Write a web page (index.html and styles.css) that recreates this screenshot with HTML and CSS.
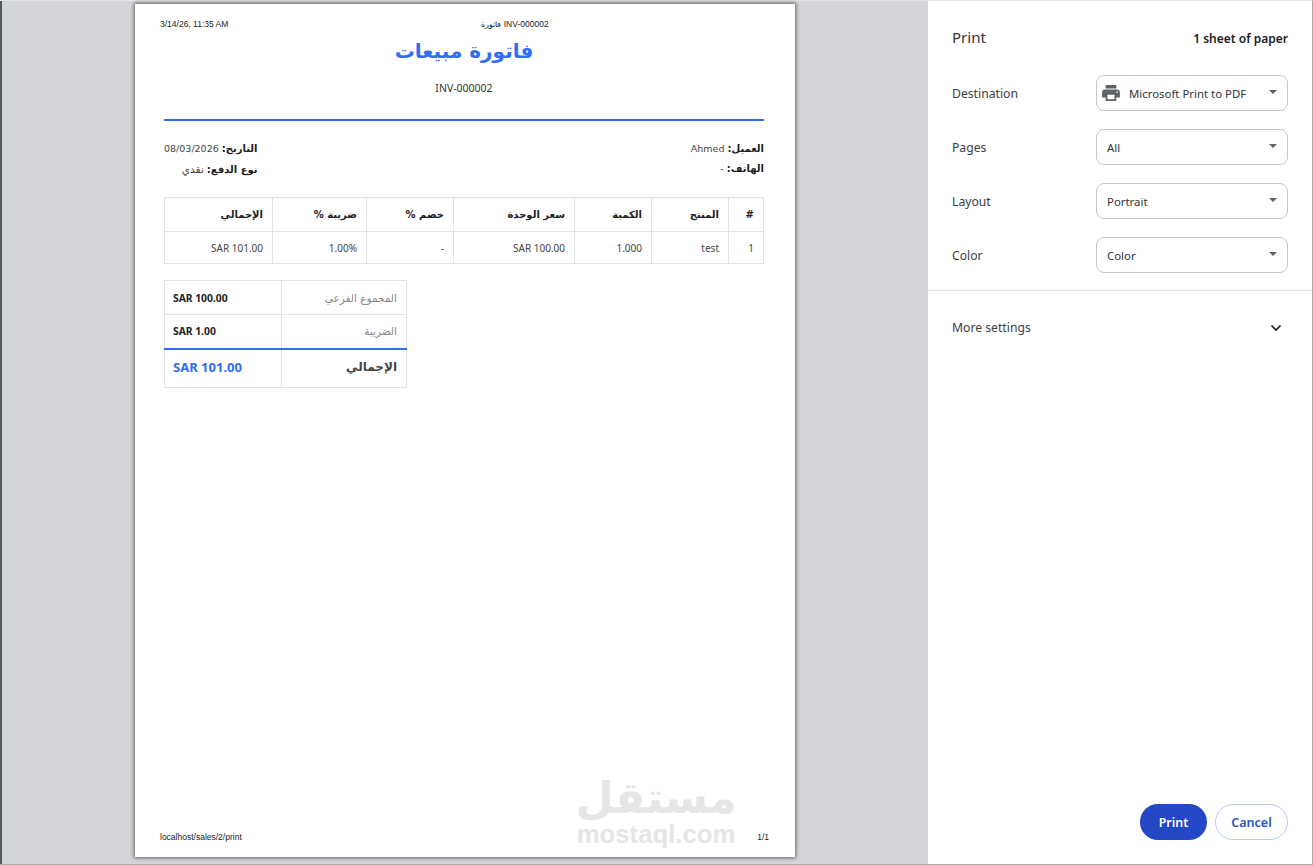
FILE: index.html
```html
<!DOCTYPE html>
<html lang="en">
<head>
<meta charset="utf-8">
<title>Print</title>
<link rel="stylesheet" href="styles.css">
</head>
<body>
<div class="app">
  <main class="preview">
    <section class="paper">
      <header class="print-head">
        <span class="stamp">3/14/26, 11:35 AM</span>
        <span class="doc-name"><span class="doc-ar">فاتورة</span> INV-000002</span>
        <span class="stamp-spacer"></span>
      </header>
      <div class="sheet">
        <h1 class="title">فاتورة مبيعات</h1>
        <p class="number">INV-000002</p>
        <hr class="rule">
        <div class="info" dir="rtl">
          <div class="info-col">
            <p class="info-line"><b>العميل:</b> Ahmed</p>
            <p class="info-line"><b>الهاتف:</b> -</p>
          </div>
          <div class="info-col">
            <p class="info-line"><b>التاريخ:</b> 08/03/2026</p>
            <p class="info-line"><b>نوع الدفع:</b> <span class="pay">نقدي</span></p>
          </div>
        </div>
        <table class="items" dir="rtl">
          <colgroup>
            <col class="c-num"><col class="c-prod"><col class="c-qty"><col class="c-price"><col class="c-disc"><col class="c-tax"><col class="c-total">
          </colgroup>
          <thead>
            <tr><th>#</th><th>المنتج</th><th>الكمية</th><th>سعر الوحدة</th><th>خصم %</th><th>ضريبة %</th><th>الإجمالي</th></tr>
          </thead>
          <tbody>
            <tr><td>1</td><td>test</td><td>1.000</td><td>SAR 100.00</td><td>-</td><td>1.00%</td><td>SAR 101.00</td></tr>
          </tbody>
        </table>
        <table class="totals" dir="rtl">
          <colgroup><col class="t-label"><col class="t-value"></colgroup>
          <tbody>
            <tr><td class="t-name">المجموع الفرعي</td><td class="t-amount">SAR 100.00</td></tr>
            <tr><td class="t-name">الضريبة</td><td class="t-amount">SAR 1.00</td></tr>
            <tr class="t-grand"><td class="t-name">الإجمالي</td><td class="t-amount">SAR 101.00</td></tr>
          </tbody>
        </table>
      </div>
      <footer class="print-foot">
        <span>localhost/sales/2/print</span>
        <span>1/1</span>
      </footer>
      <div class="watermark">
        <span class="wm-ar">مستقل</span>
        <span class="wm-en">mostaql.com</span>
      </div>
    </section>
  </main>
  <aside class="panel">
    <div class="panel-top">
      <div class="panel-head">
        <h2 class="panel-title">Print</h2>
        <span class="sheets">1 sheet of paper</span>
      </div>
      <div class="setting">
        <span class="label">Destination</span>
        <div class="select">
          <svg class="printer" viewBox="2 3 20 18" width="18" height="16" aria-hidden="true"><path fill="#5f6368" d="M19 8H5c-1.66 0-3 1.34-3 3v6h4v4h12v-4h4v-6c0-1.66-1.34-3-3-3zm-3 11H8v-5h8v5zm3-7c-.55 0-1-.45-1-1s.45-1 1-1 1 .45 1 1-.45 1-1 1zm-1-9H6v4h12V3z"/></svg>
          <span class="value">Microsoft Print to PDF</span>
          <span class="caret"></span>
        </div>
      </div>
      <div class="setting">
        <span class="label">Pages</span>
        <div class="select"><span class="value">All</span><span class="caret"></span></div>
      </div>
      <div class="setting">
        <span class="label">Layout</span>
        <div class="select"><span class="value">Portrait</span><span class="caret"></span></div>
      </div>
      <div class="setting">
        <span class="label">Color</span>
        <div class="select"><span class="value">Color</span><span class="caret"></span></div>
      </div>
    </div>
    <div class="more">
      <span class="label">More settings</span>
      <svg class="chevron" viewBox="0 0 12 8" width="12" height="8" aria-hidden="true"><path d="M1.5 1.5 6 6l4.5-4.5" fill="none" stroke="#202124" stroke-width="1.7"/></svg>
    </div>
    <div class="actions">
      <button class="btn btn-print">Print</button>
      <button class="btn btn-cancel">Cancel</button>
    </div>
  </aside>
</div>
</body>
</html>
```
FILE: styles.css
```css
* { box-sizing: border-box; }
html, body { margin: 0; padding: 0; }
body {
  width: 1313px;
  height: 865px;
  overflow: hidden;
  background: #fff;
  font-family: "Noto Sans", "Open Sans", sans-serif;
}
.app {
  display: flex;
  height: 865px;
  border-top: 1px solid #e4e5e6;
  border-bottom: 1px solid #a9a9a9;
  border-right: 1px solid #a9a9a9;
}
.preview {
  width: 928px;
  flex: none;
  background: #d5d6d9;
  border-left: 2px solid #55585c;
  padding: 3px 0 0 133px;
}
.paper {
  position: relative;
  width: 660px;
  height: 853px;
  background: #fff;
  box-shadow: 0 0 4px 1px rgba(0, 0, 0, .55);
  display: flex;
  flex-direction: column;
}
.print-head {
  display: flex;
  justify-content: space-between;
  align-items: center;
  height: 14px;
  margin-top: 13px;
  padding: 0 25px;
  font: 8.5px "Liberation Sans", Arial, sans-serif;
  color: #222;
}
.stamp { width: 172px; white-space: nowrap; }
.stamp-spacer { width: 72px; }
.doc-ar { font-size: 7.5px; }
.sheet {
  padding: 0 31px 0 29px;
  flex: 1;
  font-family: "DejaVu Sans", "Noto Sans", sans-serif;
}
.title {
  margin: 4px 0 0;
  height: 32px;
  line-height: 32px;
  text-align: center;
  font-size: 20px;
  font-weight: 700;
  color: #2f6ef5;
}
.number {
  margin: 14px 0 0;
  text-align: center;
  font: 10.5px/14px "Noto Sans", sans-serif;
  color: #333;
}
.rule {
  height: 2px;
  margin: 24px 0 0;
  border: 0;
  background: #2f6bea;
}
.info {
  display: flex;
  justify-content: space-between;
  margin-top: 21px;
}
.info-line {
  margin: 0 0 6px;
  font-size: 9.5px;
  line-height: 14px;
  color: #444;
}
.info-line b { font-size: 10px; color: #1d1d1d; }
.pay { font-size: 10.5px; }
.items, .totals {
  border-collapse: collapse;
  table-layout: fixed;
  color: #444;
}
.items { width: 599px; margin-top: 14px; }
.c-num { width: 35px; }
.c-prod { width: 77px; }
.c-qty { width: 77px; }
.c-price { width: 121px; }
.c-disc { width: 87px; }
.c-tax { width: 94px; }
.c-total { width: 108px; }
.items th, .items td, .totals td {
  border: 1px solid #e3e3e3;
  padding: 0 9px;
  text-align: right;
  white-space: nowrap;
}
.items th {
  height: 34px;
  font-size: 10px;
  font-weight: 700;
  color: #222;
}
.items td {
  height: 32px;
  font: 10px "Noto Sans", sans-serif;
}
.totals { width: 242px; margin: 16px auto 0 0; }
.t-label { width: 125px; }
.t-value { width: 117px; }
.totals td { height: 34px; }
.t-name { font-size: 10.5px; color: #888; }
.t-amount {
  font: 700 10.3px "Noto Sans", sans-serif;
  text-align: left !important;
  color: #222;
}
.totals td.t-amount { padding-left: 8px; }
.totals .t-grand td {
  height: 39px;
  padding-bottom: 2px;
  border-top: 2px solid #2f6bea;
}
.t-grand .t-name { font-size: 12px; font-weight: 700; color: #444; }
.t-grand .t-amount { font-size: 13px; color: #2f6ef5; }
.print-foot {
  display: flex;
  justify-content: space-between;
  padding: 0 26px 14px 25px;
  font: 8.5px/12px "Liberation Sans", Arial, sans-serif;
  color: #222;
}
.watermark {
  position: absolute;
  left: 442px;
  top: 770px;
  width: 158px;
  display: flex;
  flex-direction: column;
  align-items: center;
  color: #e6e6e6;
  font-weight: 700;
}
.wm-ar { font: 700 44px/48px "DejaVu Sans", sans-serif; }
.wm-en { font: 700 25.7px/24px "Liberation Sans", Arial, sans-serif; }
.panel {
  flex: 1;
  display: flex;
  flex-direction: column;
  background: #fff;
  color: #3c4043;
  font-size: 12.2px;
}
.panel-top {
  padding: 0 24px 17px;
  border-bottom: 1px solid #e3e3e3;
}
.panel-head {
  display: flex;
  justify-content: space-between;
  align-items: center;
  height: 74px;
}
.panel-title { margin: 0 0 3px; font-size: 15px; font-weight: 400; color: #333; }
.sheets { font-size: 12px; font-weight: 600; color: #202124; }
.setting {
  display: flex;
  justify-content: space-between;
  align-items: center;
  height: 36px;
  margin-bottom: 18px;
}
.setting:last-child { margin-bottom: 0; }
.label { color: #3c4043; }
.select {
  display: flex;
  align-items: center;
  width: 192px;
  height: 36px;
  padding: 0 10px;
  border: 1px solid #c6c7c9;
  border-radius: 8px;
  font-size: 11.4px;
  color: #303336;
}
.printer { margin: 0 9px 0 -5px; flex: none; }
.value { flex: 1; white-space: nowrap; }
.caret {
  width: 0;
  height: 0;
  border-left: 4px solid transparent;
  border-right: 4px solid transparent;
  border-top: 4px solid #5f6368;
  margin-bottom: 2px;
}
.more {
  display: flex;
  justify-content: space-between;
  align-items: center;
  height: 74px;
  padding: 0 30px 1px 24px;
}
.actions {
  margin-top: auto;
  display: flex;
  justify-content: flex-end;
  gap: 8px;
  padding: 0 24px 24px;
}
.btn {
  height: 36px;
  border-radius: 18px;
  font: 600 12.5px "Noto Sans", sans-serif;
}
.btn-print { width: 67px; background: #2347c5; color: #fff; border: 0; }
.btn-cancel { width: 73px; background: #fff; color: #2a52c4; border: 1px solid #b8cdf5; }
```
